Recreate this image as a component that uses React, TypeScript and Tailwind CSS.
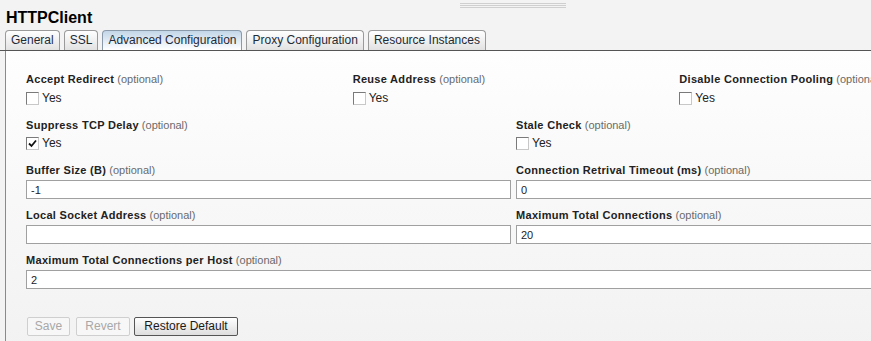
import React from 'react';

const tabs = ['General', 'SSL', 'Advanced Configuration', 'Proxy Configuration', 'Resource Instances'];

const Check = ({ checked }: { checked?: boolean }) => (
    <span className="relative inline-block h-[13px] w-[13px] border border-t-[#7a7a7a] border-l-[#7a7a7a] border-b-[#c8c8c8] border-r-[#c8c8c8] bg-white">
        {checked && (
            <svg className="absolute left-[1px] top-[1px]" width="9" height="9" viewBox="0 0 9 9">
                <path d="M1 4.5 L3.5 7 L8 1.5" stroke="#111" strokeWidth="1.8" fill="none" />
            </svg>
        )}
    </span>
);

const Label = ({ text }: { text: string }) => (
    <div className="h-[14px] text-[11px] leading-[14px] whitespace-nowrap">
        <span className="font-bold tracking-[0.3px] text-[#222]">{text}</span>{' '}
        <span className="text-[#6a6a6a]">(optional)</span>
    </div>
);

const CheckField = ({ label, checked, mt }: { label: string; checked?: boolean; mt: string }) => (
    <div>
        <Label text={label} />
        <div className={`flex items-center gap-[3px] ${mt}`}>
            <Check checked={checked} />
            <span className="text-[12px] leading-[14px] text-[#222]">Yes</span>
        </div>
    </div>
);

const TextField = ({ label, value, left }: { label: string; value: string; left?: boolean }) => (
    <div className={left ? 'pr-[5px]' : ''}>
        <Label text={label} />
        <input
            readOnly
            value={value}
            className="mt-[3px] block h-[19px] w-full border border-[#a0a0a0] bg-white px-[4px] text-[11px] text-[#222] outline-none"
        />
    </div>
);

const App = () => {
    return (
        <div className="relative h-[341px] w-[871px] overflow-hidden bg-[#f3f3f3] font-['Liberation_Sans',Arial,sans-serif]">
            <div className="absolute left-[460px] top-[3px] flex w-[106px] flex-col gap-[1px]">
                <div className="h-px bg-[#cfcfcf]" />
                <div className="h-px bg-[#cfcfcf]" />
                <div className="h-px bg-[#cfcfcf]" />
            </div>

            <h1 className="pl-[6px] pt-[8px] text-[16px] font-bold leading-[19px] text-black">HTTPClient</h1>

            <div className="mt-[3px] flex gap-[4px] border-b border-[#555] pl-[5px]">
                {tabs.map((t) => {
                    const active = t === 'Advanced Configuration';
                    return (
                        <div
                            key={t}
                            className={
                                active
                                    ? 'h-[20px] rounded-t-[4px] border border-b-0 border-[#8a9aab] bg-gradient-to-b from-[#c3d6e8] to-white px-[5px] text-[12px] leading-[19px] text-[#1e2b38]'
                                    : 'h-[20px] rounded-t-[4px] border border-b-0 border-[#9a9a9a] bg-gradient-to-b from-white to-[#e2e2e2] px-[5px] text-[12px] leading-[19px] text-[#1e2b38]'
                            }
                        >
                            {t}
                        </div>
                    );
                })}
            </div>

            <div className="ml-[5px] h-[300px] border-l border-[#8a8a8a] bg-gradient-to-b from-[#fefefe] to-[#f2f2f2] pl-[20px] pt-[21px]">
                <div className="w-[980px]">
                    <div className="grid grid-cols-3">
                        <CheckField label="Accept Redirect" mt="mt-[5px]" />
                        <CheckField label="Reuse Address" mt="mt-[5px]" />
                        <CheckField label="Disable Connection Pooling" mt="mt-[5px]" />
                    </div>
                    <div className="mt-[13px] grid grid-cols-2">
                        <CheckField label="Suppress TCP Delay" checked mt="mt-[4px]" />
                        <CheckField label="Stale Check" mt="mt-[4px]" />
                    </div>
                    <div className="mt-[13px] grid grid-cols-2">
                        <TextField label="Buffer Size (B)" value="-1" left />
                        <TextField label="Connection Retrival Timeout (ms)" value="0" />
                    </div>
                    <div className="mt-[9px] grid grid-cols-2">
                        <TextField label="Local Socket Address" value="" left />
                        <TextField label="Maximum Total Connections" value="20" />
                    </div>
                    <div className="mt-[9px]">
                        <TextField label="Maximum Total Connections per Host" value="2" />
                    </div>
                </div>

                <div className="mt-[28px] flex pl-[1px]">
                    <button className="h-[19px] w-[43px] rounded-[2px] border border-[#cfcfcf] bg-[#f7f7f7] text-[12px] leading-[17px] text-[#a8a8a8]">
                        Save
                    </button>
                    <button className="ml-[6px] h-[19px] w-[54px] rounded-[2px] border border-[#cfcfcf] bg-[#f7f7f7] text-[12px] leading-[17px] text-[#a8a8a8]">
                        Revert
                    </button>
                    <button className="ml-[4px] h-[19px] w-[104px] rounded-[2px] border border-[#555] bg-gradient-to-b from-white to-[#dedede] text-[12px] leading-[17px] text-[#1a1a1a]">
                        Restore Default
                    </button>
                </div>
            </div>
        </div>
    );
};

export default App;
